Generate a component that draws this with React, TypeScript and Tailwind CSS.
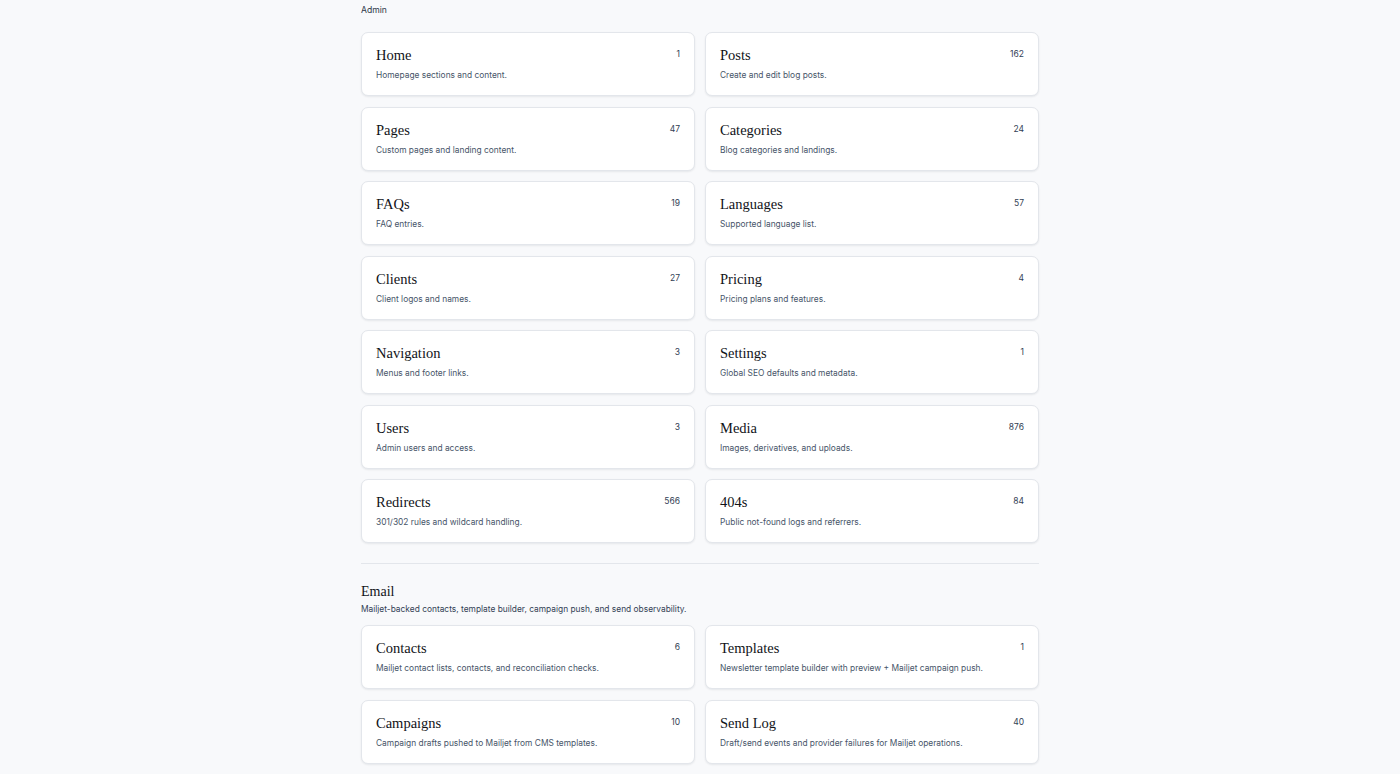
type Section = { title: string; desc: string; count: number };

const adminItems: Section[] = [
  { title: 'Home', desc: 'Homepage sections and content.', count: 1 },
  { title: 'Posts', desc: 'Create and edit blog posts.', count: 162 },
  { title: 'Pages', desc: 'Custom pages and landing content.', count: 47 },
  { title: 'Categories', desc: 'Blog categories and landings.', count: 24 },
  { title: 'FAQs', desc: 'FAQ entries.', count: 19 },
  { title: 'Languages', desc: 'Supported language list.', count: 57 },
  { title: 'Clients', desc: 'Client logos and names.', count: 27 },
  { title: 'Pricing', desc: 'Pricing plans and features.', count: 4 },
  { title: 'Navigation', desc: 'Menus and footer links.', count: 3 },
  { title: 'Settings', desc: 'Global SEO defaults and metadata.', count: 1 },
  { title: 'Users', desc: 'Admin users and access.', count: 3 },
  { title: 'Media', desc: 'Images, derivatives, and uploads.', count: 876 },
  { title: 'Redirects', desc: '301/302 rules and wildcard handling.', count: 566 },
  { title: '404s', desc: 'Public not-found logs and referrers.', count: 84 },
];

const emailItems: Section[] = [
  { title: 'Contacts', desc: 'Mailjet contact lists, contacts, and reconciliation checks.', count: 6 },
  { title: 'Templates', desc: 'Newsletter template builder with preview + Mailjet campaign push.', count: 1 },
  { title: 'Campaigns', desc: 'Campaign drafts pushed to Mailjet from CMS templates.', count: 10 },
  { title: 'Send Log', desc: 'Draft/send events and provider failures for Mailjet operations.', count: 40 },
];

function Card({ item }: { item: Section }) {
  return (
    <div className="h-[64px] bg-white rounded-[7px] border border-[#e3e6eb] shadow-[0_1px_2px_rgba(15,23,42,0.08)] px-[14px] pt-[13px] cursor-pointer hover:border-gray-300">
      <div className="flex items-start justify-between">
        <div className="font-['Liberation_Serif',serif] text-[14.5px] leading-[18px] text-[#111318]">{item.title}</div>
        <div className="text-[8.5px] leading-[14px] text-[#334155] pt-[1px]">{item.count}</div>
      </div>
      <div className="mt-[5px] text-[8.4px] leading-[12px] text-[#475569]">{item.desc}</div>
    </div>
  );
}

export default function App() {
  return (
    <div className="min-h-screen bg-[#f8f9fb] font-['Inter',sans-serif]">
      <div className="w-[678px] mx-auto pt-[5px]">
        <div className="text-[8.6px] leading-[10px] text-[#2d3748]">Admin</div>
        <div className="mt-[17px] grid grid-cols-2 gap-x-[10px] gap-y-[10.5px]">
          {adminItems.map((item) => (
            <Card key={item.title} item={item} />
          ))}
        </div>

        <div className="mt-[20px] border-t border-[#e3e6eb]" />

        <div className="mt-[20px]">
          <h2 className="font-['Liberation_Serif',serif] text-[14px] leading-[16px] text-[#111318]">Email</h2>
          <p className="mt-[3px] text-[8.4px] leading-[12px] text-[#334155]">
            Mailjet-backed contacts, template builder, campaign push, and send observability.
          </p>
        </div>
        <div className="mt-[10px] grid grid-cols-2 gap-x-[10px] gap-y-[10.5px] pb-[10px]">
          {emailItems.map((item) => (
            <Card key={item.title} item={item} />
          ))}
        </div>
      </div>
    </div>
  );
}
